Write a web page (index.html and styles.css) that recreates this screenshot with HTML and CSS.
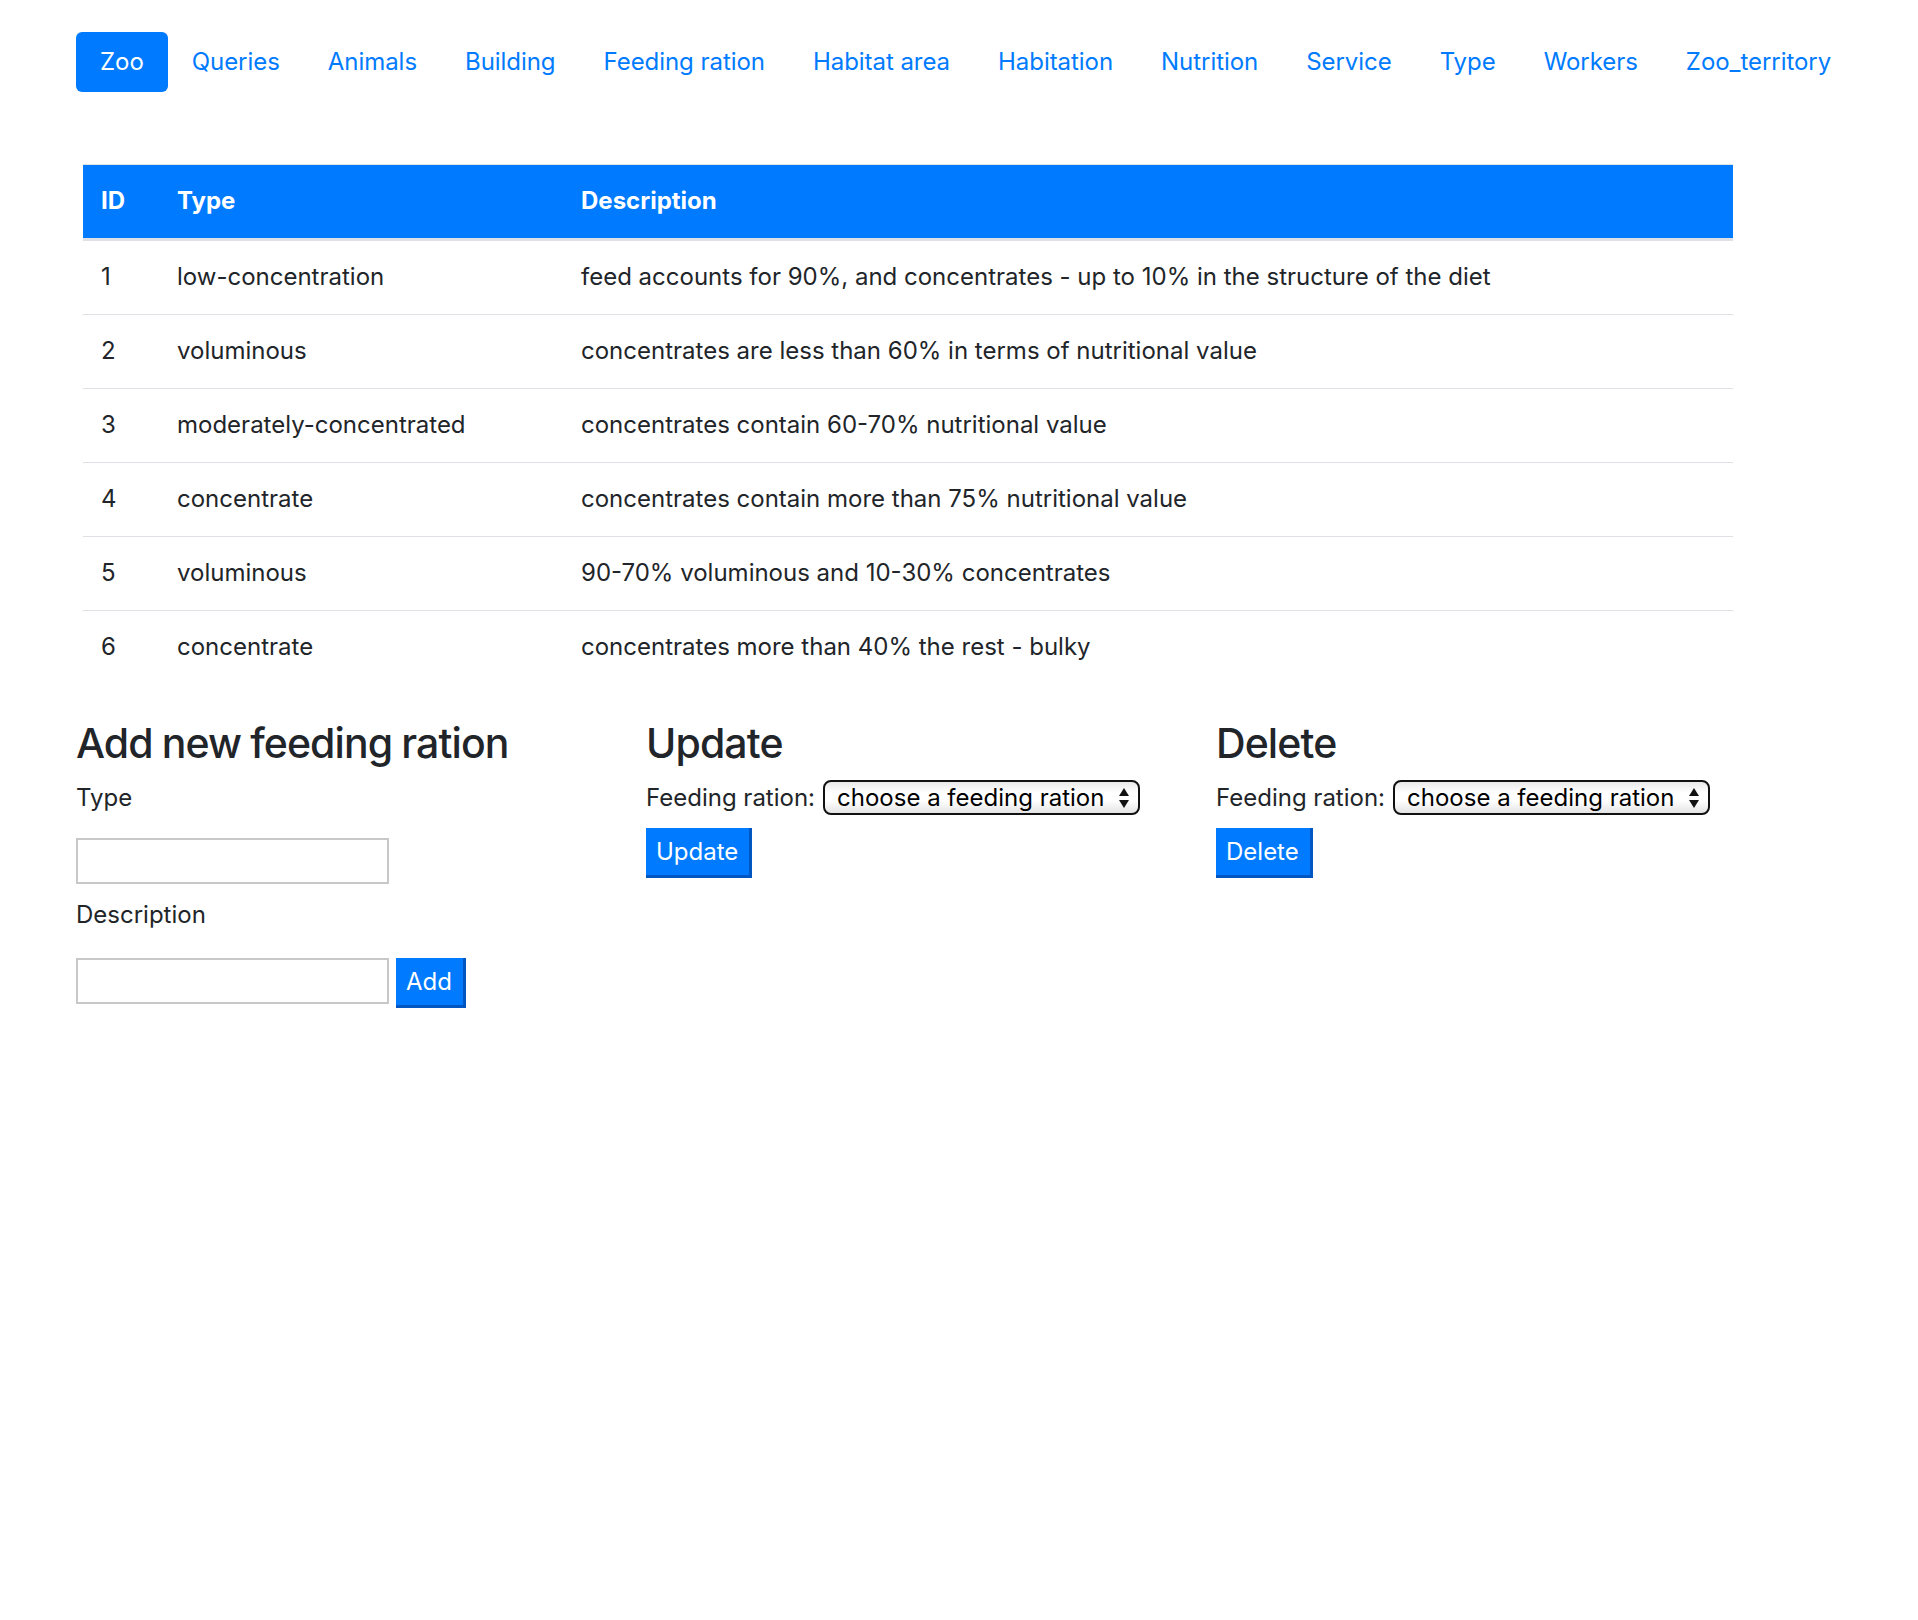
FILE: index.html
```html
<!DOCTYPE html>
<html lang="en">
<head>
<meta charset="utf-8">
<title>Feeding ration</title>
<link rel="stylesheet" href="styles.css">
</head>
<body>
<nav class="nav">
  <a class="nav-link active" href="#">Zoo</a>
  <a class="nav-link" href="#">Queries</a>
  <a class="nav-link" href="#">Animals</a>
  <a class="nav-link" href="#">Building</a>
  <a class="nav-link" href="#">Feeding ration</a>
  <a class="nav-link" href="#">Habitat area</a>
  <a class="nav-link" href="#">Habitation</a>
  <a class="nav-link" href="#">Nutrition</a>
  <a class="nav-link" href="#">Service</a>
  <a class="nav-link" href="#">Type</a>
  <a class="nav-link" href="#">Workers</a>
  <a class="nav-link" href="#">Zoo_territory</a>
</nav>

<main class="content">
  <table class="table">
    <thead>
      <tr><th class="c-id">ID</th><th class="c-type">Type</th><th>Description</th></tr>
    </thead>
    <tbody>
      <tr><td>1</td><td>low-concentration</td><td>feed accounts for 90%, and concentrates - up to 10% in the structure of the diet</td></tr>
      <tr><td>2</td><td>voluminous</td><td>concentrates are less than 60% in terms of nutritional value</td></tr>
      <tr><td>3</td><td>moderately-concentrated</td><td>concentrates contain 60-70% nutritional value</td></tr>
      <tr><td>4</td><td>concentrate</td><td>concentrates contain more than 75% nutritional value</td></tr>
      <tr><td>5</td><td>voluminous</td><td>90-70% voluminous and 10-30% concentrates</td></tr>
      <tr><td>6</td><td>concentrate</td><td>concentrates more than 40% the rest - bulky</td></tr>
    </tbody>
  </table>

  <div class="forms">
    <section class="col">
      <h3 class="title">Add new feeding ration</h3>
      <form class="add-form">
        <label class="field-label" for="type">Type</label>
        <input class="text-input" id="type" type="text">
        <label class="field-label label-desc" for="desc">Description</label>
        <div class="input-row">
          <input class="text-input" id="desc" type="text">
          <button class="btn" type="button">Add</button>
        </div>
      </form>
    </section>

    <section class="col">
      <h3 class="title">Update</h3>
      <div class="select-row">
        <label class="inline-label" for="upd">Feeding ration:</label>
        <span class="select-wrap">
          <select class="select" id="upd"><option>choose a feeding ration</option></select>
          <svg class="select-arrows" width="12" height="22" viewBox="0 0 12 22"><path d="M6 1 L11 9 L1 9 Z M1 13 L11 13 L6 21 Z" fill="#111"/></svg>
        </span>
      </div>
      <button class="btn" type="button">Update</button>
    </section>

    <section class="col">
      <h3 class="title">Delete</h3>
      <div class="select-row">
        <label class="inline-label" for="del">Feeding ration:</label>
        <span class="select-wrap">
          <select class="select" id="del"><option>choose a feeding ration</option></select>
          <svg class="select-arrows" width="12" height="22" viewBox="0 0 12 22"><path d="M6 1 L11 9 L1 9 Z M1 13 L11 13 L6 21 Z" fill="#111"/></svg>
        </span>
      </div>
      <button class="btn" type="button">Delete</button>
    </section>
  </div>
</main>
</body>
</html>
```

FILE: styles.css
```css
* { box-sizing: border-box; }

body {
  margin: 0;
  font-family: Inter, "Noto Sans", sans-serif;
  font-size: 24px;
  line-height: 36px;
  color: #212529;
  background: #fff;
}

.nav {
  display: flex;
  padding: 32px 0 0 76px;
}

.nav-link {
  display: block;
  padding: 12px 24px;
  line-height: 36px;
  color: #007bff;
  text-decoration: none;
  border-radius: 6px;
  white-space: nowrap;
  letter-spacing: -0.05px;
}

.nav-link.active {
  background: #007bff;
  color: #fff;
}

.content {
  padding: 72px 0 0 76px;
}

.table {
  width: 1650px;
  margin-left: 7px;
  border-collapse: collapse;
}

.table th,
.table td {
  padding: 18px 18px 19px;
  text-align: left;
  vertical-align: top;
  border-top: 1px solid #dee2e6;
}

.table thead th {
  background: #007bff;
  color: #fff;
  font-weight: 700;
  border-bottom: 3px solid #dee2e6;
}

.c-id { width: 76px; }
.c-type { width: 404px; }

.forms {
  display: flex;
  margin-top: 34px;
}

.col {
  width: 570px;
}

.title {
  margin: 0 0 12px;
  font-size: 41px;
  line-height: 50px;
  font-weight: 500;
  letter-spacing: -0.9px;
  word-spacing: -1px;
}

.add-form {
  display: flex;
  flex-direction: column;
  align-items: flex-start;
}

.field-label {
  display: block;
  margin-bottom: 22px;
}

.label-desc {
  margin-top: 13px;
  margin-bottom: 25px;
}

.text-input {
  width: 313px;
  height: 46px;
  border: 2px solid #c8c8c8;
  background: #fff;
  font: inherit;
  padding: 0 6px;
}

.input-row {
  display: flex;
  align-items: flex-start;
  gap: 7px;
}

.btn {
  display: block;
  height: 50px;
  padding: 0 11px 0 10px;
  background: #007bff;
  color: #fff;
  font: inherit;
  border: none;
  border-right: 3px solid #0057c2;
  border-bottom: 3px solid #0057c2;
  cursor: pointer;
}

.select-row {
  display: flex;
  align-items: center;
  gap: 8px;
  height: 36px;
  margin-bottom: 12px;
}

.inline-label {
  white-space: nowrap;
}

.select-wrap {
  position: relative;
  display: inline-block;
}

.select {
  appearance: none;
  -webkit-appearance: none;
  width: 317px;
  height: 35px;
  padding: 0 30px 0 12px;
  font: inherit;
  line-height: 31px;
  color: #000;
  border: 2px solid #111;
  border-radius: 8px;
  background: linear-gradient(#e9e9e9, #ffffff 35%, #ffffff 60%, #e4e4e4);
}

.select-arrows {
  position: absolute;
  right: 10px;
  top: 7px;
  pointer-events: none;
}
```
